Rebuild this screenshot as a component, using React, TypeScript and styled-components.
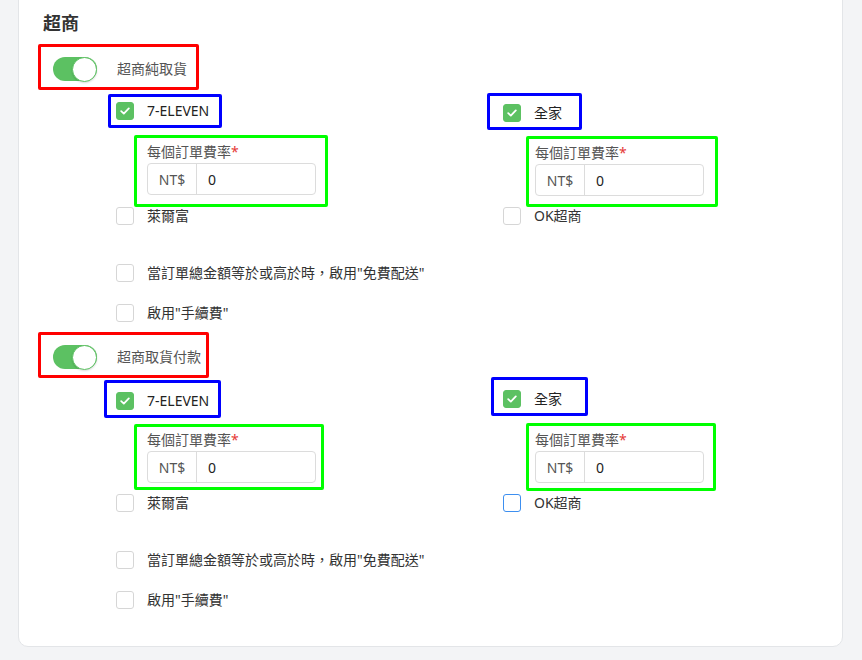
import styled, { createGlobalStyle } from 'styled-components';

const GlobalStyle = createGlobalStyle`
    body {
        margin: 0;
        background: #f3f4f6;
        font-family: "Noto Sans", "Noto Sans CJK TC", sans-serif;
        font-size: 14px;
        color: #333;
    }
`;

const Page = styled.div`
    padding: 0 19px 12px 18px;
    overflow: hidden;
`;

const Card = styled.div`
    margin-top: -10px;
    background: #fff;
    border: 1px solid #e3e5e8;
    border-radius: 10px;
    padding: 20px 20px 37px 19px;
`;

const Title = styled.div`
    margin-left: 5px;
    font-size: 18px;
    line-height: 24px;
    font-weight: 700;
    color: #333;
`;

interface BoxProps {
    $color: string;
    $w: number;
    $ml?: number;
    $mt?: number;
    $pad: string;
}

// the coloured outlines drawn over the screenshot
const Annot = styled.div<BoxProps>`
    box-sizing: border-box;
    width: ${p => p.$w}px;
    margin-left: ${p => p.$ml ?? 0}px;
    margin-top: ${p => p.$mt ?? 0}px;
    padding: ${p => p.$pad};
    border: 3px solid ${p => p.$color};
    border-radius: 2px;
`;

const ToggleRow = styled.div`
    display: flex;
    align-items: center;
    gap: 20px;
    height: 24px;
`;

const Toggle = styled.div<{ $on: boolean }>`
    box-sizing: border-box;
    width: 44px;
    height: 24px;
    border-radius: 12px;
    background: ${p => (p.$on ? '#5cc162' : '#ddd')};
    display: flex;
    justify-content: ${p => (p.$on ? 'flex-end' : 'flex-start')};
    align-items: center;
`;

const Knob = styled.div`
    box-sizing: border-box;
    width: 25px;
    height: 25px;
    border-radius: 50%;
    background: #fff;
    border: 1px solid #5cc162;
    box-shadow: 0 1px 2px rgba(0, 0, 0, 0.15);
`;

const ToggleLabel = styled.span`
    color: #555;
    font-size: 14px;
    line-height: 20px;
`;

const StoreGrid = styled.div<{ $mt: number }>`
    display: grid;
    grid-template-columns: 387px 1fr;
    align-items: start;
    padding-left: 78px;
    margin-top: ${p => p.$mt}px;
`;

const Column = styled.div`
    display: flex;
    flex-direction: column;
`;

const CheckRow = styled.div<{ $h?: number; $mt?: number }>`
    display: flex;
    align-items: center;
    gap: 13px;
    height: ${p => p.$h ?? 18}px;
    margin-top: ${p => p.$mt ?? 0}px;
`;

const Box = styled.span<{ $checked?: boolean; $focus?: boolean }>`
    box-sizing: border-box;
    flex: none;
    width: 18px;
    height: 18px;
    border-radius: 3px;
    border: 1px solid ${p => (p.$checked ? '#5cc162' : p.$focus ? '#3d8ff0' : '#d6d6d6')};
    background: ${p => (p.$checked ? '#5cc162' : '#fff')};
    display: flex;
    align-items: center;
    justify-content: center;
`;

const CheckText = styled.span<{ $strong?: boolean }>`
    color: ${p => (p.$strong ? '#222' : '#333')};
    font-size: 14px;
    line-height: 20px;
    white-space: nowrap;
`;

const FieldLabel = styled.div`
    color: #555;
    font-size: 14px;
    line-height: 20px;
    margin-bottom: 1px;
`;

const Required = styled.span`
    color: #e53935;
`;

const InputGroup = styled.div`
    box-sizing: border-box;
    width: 169px;
    height: 32px;
    border: 1px solid #dcdcdc;
    border-radius: 4px;
    display: flex;
    align-items: stretch;
`;

const Prefix = styled.span`
    width: 48px;
    border-right: 1px solid #dcdcdc;
    display: flex;
    align-items: center;
    justify-content: center;
    color: #555;
`;

const Value = styled.span`
    padding-left: 11px;
    display: flex;
    align-items: center;
    color: #222;
`;

const ExtraRows = styled.div`
    display: flex;
    flex-direction: column;
    gap: 22px;
    padding-left: 78px;
    margin-top: 39px;
`;

const Check = ({ checked, focus }: { checked?: boolean; focus?: boolean }) => (
    <Box $checked={checked} $focus={focus}>
        {checked && (
            <svg width="10" height="8" viewBox="0 0 10 8">
                <path d="M1.2 4.2 L3.8 6.6 L8.8 1.4" fill="none" stroke="#fff" strokeWidth="1.8" strokeLinecap="round" strokeLinejoin="round" />
            </svg>
        )}
    </Box>
);

interface BoxSpec {
    w: number;
    ml: number;
    mt: number;
    pad: string;
}

interface StoreSpec {
    name: string;
    other: string;
    otherFocus?: boolean;
    blue: BoxSpec;
    green: BoxSpec;
    otherMt: number;
}

interface SectionSpec {
    label: string;
    redW: number;
    gridMt: number;
    stores: StoreSpec[];
}

const sections: SectionSpec[] = [
    {
        label: '超商純取貨',
        redW: 161,
        gridMt: 4,
        stores: [
            {
                name: '7-ELEVEN', other: '萊爾富',
                blue: { w: 114, ml: -8, mt: 0, pad: '0 0 0 5px' },
                green: { w: 194, ml: 18, mt: 7, pad: '4px 0 9px 10px' },
                otherMt: 0,
            },
            {
                name: '全家', other: 'OK超商',
                blue: { w: 95, ml: -16, mt: -1, pad: '3px 0 0 13px' },
                green: { w: 192, ml: 23, mt: 6, pad: '4px 0 8px 6px' },
                otherMt: 0,
            },
        ],
    },
    {
        label: '超商取貨付款',
        redW: 171,
        gridMt: 2,
        stores: [
            {
                name: '7-ELEVEN', other: '萊爾富',
                blue: { w: 117, ml: -12, mt: 0, pad: '4px 0 0 9px' },
                green: { w: 190, ml: 18, mt: 6, pad: '3px 0 4px 10px' },
                otherMt: 4,
            },
            {
                name: '全家', other: 'OK超商', otherFocus: true,
                blue: { w: 97, ml: -12, mt: -3, pad: '5px 0 0 9px' },
                green: { w: 190, ml: 23, mt: 7, pad: '4px 0 5px 6px' },
                otherMt: 3,
            },
        ],
    },
];

const Section = ({ spec, first }: { spec: SectionSpec; first: boolean }) => (
    <>
        <Annot $color="#ff0000" $w={spec.redW} $mt={first ? 9 : 10} $pad="10px 0 6px 12px">
            <ToggleRow>
                <Toggle $on><Knob /></Toggle>
                <ToggleLabel>{spec.label}</ToggleLabel>
            </ToggleRow>
        </Annot>
        <StoreGrid $mt={spec.gridMt}>
            {spec.stores.map(s => (
                <Column key={s.name}>
                    <Annot $color="#0000ff" $w={s.blue.w} $ml={s.blue.ml} $mt={s.blue.mt} $pad={s.blue.pad}>
                        <CheckRow $h={28}>
                            <Check checked />
                            <CheckText $strong>{s.name}</CheckText>
                        </CheckRow>
                    </Annot>
                    <Annot $color="#00ff00" $w={s.green.w} $ml={s.green.ml} $mt={s.green.mt} $pad={s.green.pad}>
                        <FieldLabel>每個訂單費率<Required>*</Required></FieldLabel>
                        <InputGroup>
                            <Prefix>NT$</Prefix>
                            <Value>0</Value>
                        </InputGroup>
                    </Annot>
                    <CheckRow $mt={s.otherMt}>
                        <Check focus={s.otherFocus} />
                        <CheckText>{s.other}</CheckText>
                    </CheckRow>
                </Column>
            ))}
        </StoreGrid>
        <ExtraRows>
            <CheckRow>
                <Check />
                <CheckText>當訂單總金額等於或高於時，啟用"免費配送"</CheckText>
            </CheckRow>
            <CheckRow>
                <Check />
                <CheckText>啟用"手續費"</CheckText>
            </CheckRow>
        </ExtraRows>
    </>
);

const App = () => {
    return (
        <Page>
            <GlobalStyle />
            <Card>
                <Title>超商</Title>
                {sections.map((s, i) => (
                    <Section key={s.label} spec={s} first={i === 0} />
                ))}
            </Card>
        </Page>
    );
};

export default App;
